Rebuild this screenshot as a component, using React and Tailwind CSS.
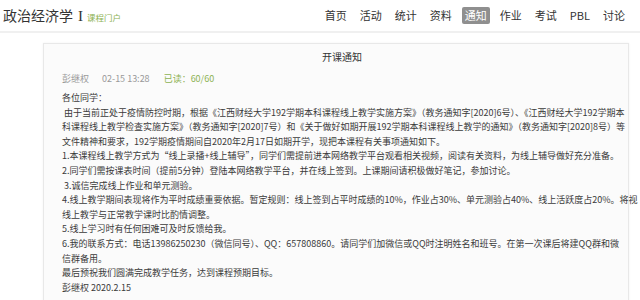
import React from 'react';

const navItems = ['首页', '活动', '统计', '资料', '通知', '作业', '考试', 'PBL', '讨论'];

const bodyLines = [
  '各位同学：',
  '\u00a0由于当前正处于疫情防控时期，根据《江西财经大学192学期本科课程线上教学实施方案》（教务通知字[2020]6号）、《江西财经大学192学期本',
  '科课程线上教学检查实施方案》（教务通知字[2020]7号）和《关于做好如期开展192学期本科课程线上教学的通知》（教务通知字[2020]8号）等',
  '文件精神和要求，192学期疫情期间自2020年2月17日如期开学，现把本课程有关事项通知如下。',
  '1.本课程线上教学方式为“线上录播+线上辅导”，同学们需提前进本网络教学平台观看相关视频，阅读有关资料，为线上辅导做好充分准备。',
  '2.同学们需按课表时间（提前5分钟）登陆本网络教学平台，并在线上签到。上课期间请积极做好笔记，参加讨论。',
  '\u00a03.诚信完成线上作业和单元测验。',
  '4.线上教学期间表现将作为平时成绩重要依据。暂定规则：线上签到占平时成绩的10%，作业占30%、单元测验占40%、线上活跃度占20%。将视',
  '线上教学与正常教学课时比酌情调整。',
  '5.线上学习时有任何困难可及时反馈给我。',
  '6.我的联系方式：电话13986250230（微信同号）、QQ：657808860。请同学们加微信或QQ时注明姓名和班号。在第一次课后将建QQ群和微',
  '信群备用。',
  '最后预祝我们圆满完成教学任务，达到课程预期目标。',
  '彭继权 2020.2.15',
];

const App = () => {
  return (
    <div
      className="w-[640px] h-[300px] overflow-hidden bg-white text-[#333]"
      style={{ fontFamily: '"Noto Sans CJK SC", "Noto Sans", sans-serif' }}
    >
      {/* Header */}
      <header className="h-[33px] flex items-center justify-between border-b-2 border-[#f0f0f0] pl-[3px] pr-[12px]">
        <div className="flex items-baseline">
          <span className="text-[14px] leading-none text-[#333]">政治经济学</span>
          <span className="ml-[5px] text-[15px] leading-none text-[#333] font-['Liberation_Serif',serif]">I</span>
          <span className="ml-[4px] text-[8.5px] text-[#8db253]">课程门户</span>
        </div>
        <nav className="flex items-center gap-[7px] text-[11px] leading-none text-[#333]">
          {navItems.map((item) =>
            item === '通知' ? (
              <span key={item} className="px-[3px] py-[3px] rounded-[2px] bg-[#8f8f8f] text-white">
                {item}
              </span>
            ) : (
              <span key={item} className="px-[3px] py-[3px]">
                {item}
              </span>
            )
          )}
        </nav>
      </header>

      {/* Notice card */}
      <div className="ml-[43px] mr-[11px] mt-[10px] h-[300px] border border-[#e8e8e8] bg-[#fbfbfb] shadow-[0_0_2px_rgba(0,0,0,0.06)]">
        <div className="pt-[5px] pl-[12px] text-center text-[10px] leading-[16px] text-[#333]">开课通知</div>
        <div className="mt-[8px] pl-[18px] flex items-center text-[9px] leading-[12px] text-[#999]">
          <span>彭继权</span>
          <span className="ml-[13px]">02-15 13:28</span>
          <span className="ml-[14px] text-[#8db253]">已读：60/60</span>
        </div>
        <div className="mt-[6px] pl-[18px] text-[9px] leading-[14.6px] text-[#3a3a3a] whitespace-nowrap">
          {bodyLines.map((line, i) => (
            <div key={i}>{line}</div>
          ))}
        </div>
      </div>
    </div>
  );
};

export default App;
